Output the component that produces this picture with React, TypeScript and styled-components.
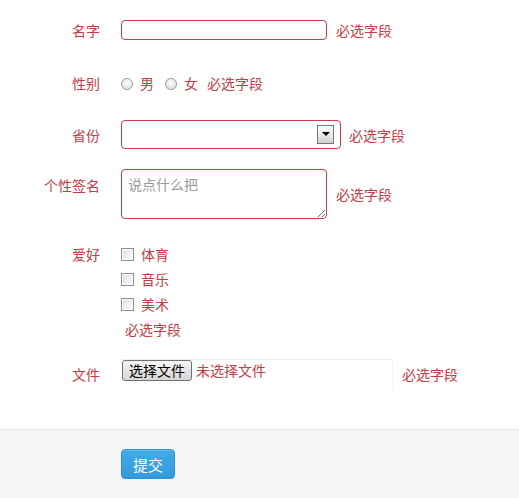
import React from "react";
import styled, {createGlobalStyle} from "styled-components";

const GlobalStyle = createGlobalStyle`
  html, body {
    margin: 0;
    padding: 0;
    background: #fff;
    font-family: "Noto Sans CJK SC", "Noto Sans", sans-serif;
    font-size: 14px;
    color: #c43c45;
  }
`;

const errorColor = "#c43c45";

const Form = styled.form`
  display: flex;
  flex-direction: column;
  width: 519px;
  min-height: 498px;
`;

const Row: any = styled.div`
  display: grid;
  grid-template-columns: 100px auto;
  column-gap: 21px;
  align-items: ${({top}: any) => top ? 'start' : 'center'};
  margin-top: ${({mt}: any) => mt}px;
  height: ${({h}: any) => h}px;
`;

const Label: any = styled.label`
  text-align: right;
  color: ${errorColor};
  line-height: 20px;
  padding-top: ${({pt}: any) => pt || 0}px;
`;

const Controls = styled.div`
  display: flex;
  align-items: center;
`;

const Help: any = styled.span`
  color: ${errorColor};
  line-height: ${({lh}: any) => lh || 20}px;
  margin-left: ${({ml}: any) => ml ?? 9}px;
`;

const TextInput = styled.input`
  box-sizing: border-box;
  width: 206px;
  height: 20px;
  border: 1px solid ${errorColor};
  border-radius: 4px;
  padding: 0 6px;
  font: inherit;
  outline: none;
`;

const SelectBox = styled.div`
  box-sizing: border-box;
  width: 220px;
  height: 29px;
  border: 1px solid ${errorColor};
  border-radius: 4px;
  display: flex;
  align-items: center;
  justify-content: flex-end;
  padding-right: 6px;
`;

const SelectArrow = styled.div`
  box-sizing: border-box;
  width: 17px;
  height: 19px;
  border: 1px solid #777;
  background: linear-gradient(#fafafa 0%, #ececec 50%, #cfcfcf 100%);
  display: flex;
  align-items: center;
  justify-content: center;

  &::after {
    content: "";
    border-left: 4px solid transparent;
    border-right: 4px solid transparent;
    border-top: 4px solid #000;
    margin-top: -2px;
  }
`;

const TextArea = styled.textarea`
  box-sizing: border-box;
  width: 206px;
  height: 50px;
  border: 1px solid ${errorColor};
  border-radius: 4px;
  padding: 4px 6px;
  font: inherit;
  line-height: 20px;
  resize: both;
  outline: none;

  &::placeholder {
    color: #999;
  }
`;

const Radio = styled.span`
  box-sizing: border-box;
  width: 12px;
  height: 12px;
  border-radius: 50%;
  border: 1px solid #999;
  background: radial-gradient(circle at 50% 40%, #fff 0%, #e6e6e6 55%, #c4c4c4 100%);
  box-shadow: inset 0 0 0 1px #f4f4f4;
  margin-top: 1px;
`;

const Check = styled.span`
  box-sizing: border-box;
  width: 13px;
  height: 13px;
  border: 1px solid #8f8f8f;
  background: linear-gradient(135deg, #dcdcdc 0%, #f2f2f2 60%, #fff 100%);
  box-shadow: inset 0 0 0 1px #fff;
`;

const Choice: any = styled.span`
  display: inline-flex;
  align-items: center;
  gap: 7px;
  margin-right: ${({mr}: any) => mr || 0}px;
  line-height: ${({lh}: any) => lh || 20}px;
`;

const CheckList = styled.div`
  display: flex;
  flex-direction: column;
`;

const FileBox = styled.div`
  box-sizing: border-box;
  width: 272px;
  height: 30px;
  border-top: 1px solid #eee;
  border-right: 1px solid #f4f4f4;
  display: flex;
  align-items: flex-start;
  gap: 4px;
  padding-left: 1px;
`;

const FileButton = styled.span`
  box-sizing: border-box;
  width: 70px;
  height: 21px;
  border: 1px solid #707070;
  border-radius: 3px;
  background: linear-gradient(#f6f6f6 0%, #e6e6e6 50%, #d6d6d6 100%);
  color: #000;
  font-size: 14px;
  line-height: 19px;
  text-align: center;
`;

const FileText = styled.span`
  color: ${errorColor};
  line-height: 21px;
`;

const Footer = styled.div`
  margin-top: 40px;
  flex: 1;
  background: #f5f5f5;
  border-top: 1px solid #e5e5e5;
  padding: 19px 0 0 121px;
`;

const SubmitButton = styled.button`
  width: 54px;
  height: 30px;
  border: 1px solid #2e8fd3;
  border-radius: 4px;
  background: linear-gradient(#42abeb, #3499dc);
  color: #fff;
  font: inherit;
  font-size: 15px;
  padding: 0;
  box-shadow: inset 0 1px 0 rgba(255, 255, 255, 0.2);
`;

const App: React.FC = () => {
    return (
        <>
            <GlobalStyle/>
            <Form onSubmit={(ev) => ev.preventDefault()}>
                <Row mt={20} h={20}>
                    <Label>名字</Label>
                    <Controls>
                        <TextInput type="text"/>
                        <Help>必选字段</Help>
                    </Controls>
                </Row>
                <Row mt={33} h={20}>
                    <Label>性别</Label>
                    <Controls>
                        <Choice mr={11}><Radio/>男</Choice>
                        <Choice mr={9}><Radio/>女</Choice>
                        <Help ml={0}>必选字段</Help>
                    </Controls>
                </Row>
                <Row mt={27} h={29}>
                    <Label>省份</Label>
                    <Controls>
                        <SelectBox><SelectArrow/></SelectBox>
                        <Help ml={8}>必选字段</Help>
                    </Controls>
                </Row>
                <Row mt={20} h={50} top>
                    <Label pt={6}>个性签名</Label>
                    <Controls>
                        <TextArea placeholder="说点什么把"/>
                        <Help>必选字段</Help>
                    </Controls>
                </Row>
                <Row mt={23} h={100} top>
                    <Label pt={2}>爱好</Label>
                    <CheckList>
                        <Choice lh={25}><Check/>体育</Choice>
                        <Choice lh={25}><Check/>音乐</Choice>
                        <Choice lh={25}><Check/>美术</Choice>
                        <Help ml={4} lh={25}>必选字段</Help>
                    </CheckList>
                </Row>
                <Row mt={17} h={30}>
                    <Label>文件</Label>
                    <Controls>
                        <FileBox>
                            <FileButton>选择文件</FileButton>
                            <FileText>未选择文件</FileText>
                        </FileBox>
                        <Help>必选字段</Help>
                    </Controls>
                </Row>
                <Footer>
                    <SubmitButton type="submit">提交</SubmitButton>
                </Footer>
            </Form>
        </>
    );
};

export default App;
